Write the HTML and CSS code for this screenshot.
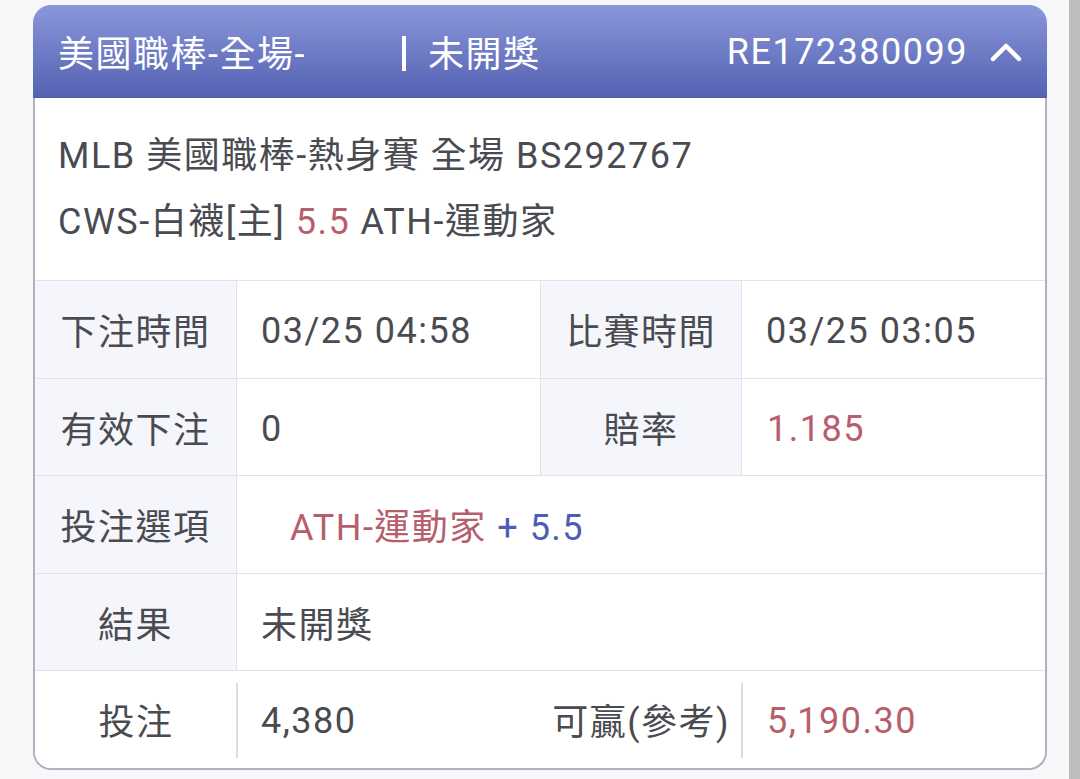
FILE: index.html
```html
<!DOCTYPE html>
<html lang="zh-Hant">
<head>
<meta charset="utf-8">
<title>注單</title>
<link rel="stylesheet" href="styles.css">
</head>
<body>
<div class="page">
  <main class="main">
    <section class="card">
      <header class="head">
        <span class="title">美國職棒-全場-</span>
        <span class="sep"></span>
        <span class="status">未開獎</span>
        <span class="order">RE172380099</span>
        <svg class="chev" width="32" height="22" viewBox="0 0 32 22"><polyline points="3,19 16,6 29,19" fill="none" stroke="#ffffff" stroke-width="4.5" stroke-linecap="round" stroke-linejoin="round"/></svg>
      </header>
      <div class="body">
        <div class="info">
          <div class="line">MLB 美國職棒-熱身賽 全場 BS292767</div>
          <div class="line">CWS-白襪[主] <span class="red">5.5</span> ATH-運動家</div>
        </div>
        <div class="grid">
          <div class="cell lab">下注時間</div>
          <div class="cell val"><span class="num">03/25 04:58</span></div>
          <div class="cell lab">比賽時間</div>
          <div class="cell val last"><span class="num">03/25 03:05</span></div>

          <div class="cell lab">有效下注</div>
          <div class="cell val"><span class="num">0</span></div>
          <div class="cell lab">賠率</div>
          <div class="cell val last red"><span class="num">1.185</span></div>

          <div class="cell lab">投注選項</div>
          <div class="cell val span3 pick"><span><span class="red">ATH-運動家</span> <span class="blue">+ 5.5</span></span></div>

          <div class="cell lab">結果</div>
          <div class="cell val span3">未開獎</div>

          <div class="cell lab plain div">投注</div>
          <div class="cell val noline"><span class="num">4,380</span></div>
          <div class="cell lab plain right div">可贏(參考)</div>
          <div class="cell val last red"><span class="num">5,190.30</span></div>
        </div>
      </div>
    </section>
  </main>
  <div class="scrollbar"></div>
</div>
</body>
</html>
```

FILE: styles.css
```css
html, body {
  margin: 0;
  padding: 0;
  background: #f7f7f9;
}
body {
  font-family: "Roboto", "Noto Sans CJK TC", sans-serif;
  color: #4a4b51;
  font-size: 36px;
  letter-spacing: 1.5px;
}
.page {
  display: flex;
  height: 779px;
  overflow: hidden;
}
.main {
  flex: 1;
  padding: 5px 0 0 33px;
}
.scrollbar {
  width: 11px;
  background: #bdbdbf;
}
.card {
  width: 1014px;
}
.head {
  height: 93px;
  box-sizing: border-box;
  border-radius: 18px 18px 0 0;
  background: linear-gradient(#8b97da 0%, #6f7cc6 50%, #5462b2 100%);
  border-bottom: 1px solid #4f5ca8;
  color: #ffffff;
  display: flex;
  align-items: center;
  padding: 0 25px 0 25px;
}
.title {
  width: 344px;
  white-space: nowrap;
}
.sep {
  width: 4px;
  height: 35px;
  background: #ffffff;
  margin-right: 22px;
  margin-top: 4px;
}
.status {
  flex: 1;
}
.order {
  margin-right: 22px;
  margin-top: 2px;
}
.chev {
  display: block;
}
.body {
  border: 2px solid #b1b2c1;
  border-top: none;
  border-radius: 0 0 18px 18px;
  background: #ffffff;
  overflow: hidden;
}
.info {
  padding: 25px 23px;
}
.line {
  line-height: 66px;
  height: 66px;
  white-space: nowrap;
}
.red {
  color: #b75e6c;
}
.blue {
  color: #4b5eb3;
}
.grid {
  display: grid;
  grid-template-columns: 202px 304px 201px 1fr;
  grid-auto-rows: 97.5px;
}
.cell {
  box-sizing: border-box;
  border-top: 1px solid #e2e3e9;
  display: flex;
  align-items: center;
  white-space: nowrap;
  position: relative;
}
.num {
  padding-top: 4px;
}
.lab {
  justify-content: center;
  background: #f5f6fb;
  border-right: 1px solid #e2e3e9;
}
.val {
  padding-left: 24px;
  border-right: 1px solid #e2e3e9;
}
.val.last, .val.span3 {
  border-right: none;
}
.span3 {
  grid-column: span 3;
}
.pick {
  padding-left: 53px;
}
.plain {
  background: #ffffff;
  border-right: none;
}
.noline {
  border-right: none;
}
.right {
  justify-content: flex-end;
  padding-right: 12px;
}
.div::after {
  content: "";
  position: absolute;
  right: -1px;
  top: 12px;
  bottom: 10px;
  width: 2px;
  background: #dcdde2;
}
.val.last.red {
  padding-left: 25px;
}
```
